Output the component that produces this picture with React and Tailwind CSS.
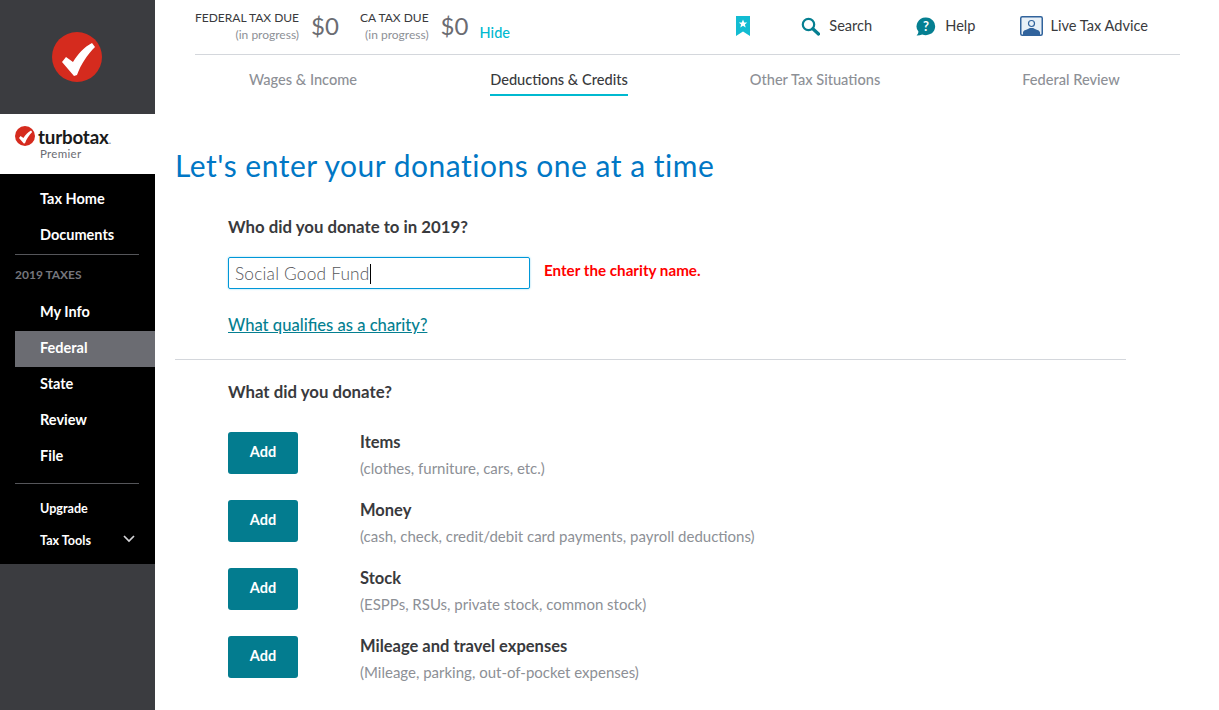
import React from "react";

function Check({ size }) {
  return (
    <svg width={size} height={size} viewBox="0 0 50 50" className="block shrink-0">
      <circle cx="25" cy="25" r="25" fill="#d52b1e" />
      <path d="M10 30 L14 25 L21 30 C26 22 32 15 40 11 L43 15 C35 23 29 32 25 43 L22 44 Z" fill="#fff" />
    </svg>
  );
}

function NavItem({ label, active, small }) {
  return (
    <div className={`h-9 pb-[2px] flex items-center ml-[15px] pl-[25px] font-bold text-white ${small ? "text-[12.6px]" : "text-[14.5px]"} ${active ? "bg-[#6b6c72]" : ""}`}>
      {label}
    </div>
  );
}

function Sidebar() {
  return (
    <aside className="w-[155px] shrink-0 bg-[#3b3c40] flex flex-col h-[710px]">
      <div className="h-[114px] flex items-center justify-center pr-px">
        <Check size={50} />
      </div>
      <div className="h-[60px] bg-white pl-[15px] pt-[12px]">
        <div className="flex items-start gap-[3px] h-[22px]">
          <Check size={20} />
          <span className="block h-[22px] text-[18.8px] leading-[22px] font-bold tracking-[-0.2px] text-[#1a1a1a]">turbotax<span className="text-[#8d9096] font-normal text-[12px] leading-none">.</span></span>
        </div>
        <div className="pl-[25px] text-[11.5px] leading-[12px] text-[#6b6c72] tracking-[0.3px]">Premier</div>
      </div>
      <nav className="h-[390px] bg-black flex flex-col pt-[8px]">
        <NavItem label="Tax Home" />
        <NavItem label="Documents" />
        <div className="ml-[15px] w-[124px] border-t border-[#55565a]" />
        <div className="ml-[15px] h-[40px] flex items-center text-[12px] font-bold text-[#75767c]">2019 TAXES</div>
        <NavItem label="My Info" />
        <NavItem label="Federal" active />
        <NavItem label="State" />
        <NavItem label="Review" />
        <NavItem label="File" />
        <div className="ml-[15px] w-[124px] border-t border-[#55565a] mt-[8px] mb-[8px]" />
        <NavItem label="Upgrade" small />
        <div className="relative mt-[-4px]">
          <NavItem label="Tax Tools" small />
          <svg width="12" height="8" viewBox="0 0 12 8" className="absolute left-[123px] top-[11px]" fill="none" stroke="#d5d5d8" strokeWidth="1.7">
            <path d="M1 1 L6 6 L11 1" />
          </svg>
        </div>
      </nav>
    </aside>
  );
}

function TaxDue({ label, amount }) {
  return (
    <div className="flex items-center">
      <div className="text-right">
        <div className="text-[12px] leading-[17px] text-[#393a3d]">{label}</div>
        <div className="text-[12px] leading-[17px] text-[#8d9096]">(in progress)</div>
      </div>
      <div className="ml-[12px] text-[24px] leading-[30px] text-[#6b6c72] w-[29px]">{amount}</div>
    </div>
  );
}

function Header() {
  return (
    <div className="ml-[40px] mr-[39px] h-[55px] pb-[2px] border-b border-[#d4d7dc] flex items-center text-[14.6px] text-[#393a3d]">
      <TaxDue label="FEDERAL TAX DUE" amount="$0" />
      <div className="ml-[20px]"><TaxDue label="CA TAX DUE" amount="$0" /></div>
      <span className="ml-[10px] mt-[13px] text-[14.5px] font-medium text-[#00b9d0]">Hide</span>
      <div className="ml-auto flex items-center h-full mr-[32px]">
        <svg width="14" height="20" viewBox="0 0 14 20" className="mr-[51px]">
          <path d="M0 0H14V20L7 15.5L0 20Z" fill="#12bcd2" />
          <path d="M7 3.5L8.2 6.4L11.2 6.6L8.9 8.5L9.7 11.4L7 9.8L4.3 11.4L5.1 8.5L2.8 6.6L5.8 6.4Z" fill="#fff" />
        </svg>
        <svg width="19" height="19" viewBox="0 0 19 19" className="mr-[9px]" fill="none">
          <circle cx="7.5" cy="7.5" r="5.7" stroke="#057f91" strokeWidth="2.2" />
          <path d="M11.8 11.8L17.5 17" stroke="#057f91" strokeWidth="3.2" strokeLinecap="round" />
        </svg>
        <span>Search</span>
        <svg width="20" height="19" viewBox="0 0 20 19" className="ml-[44px] mr-[9px]">
          <path d="M10 0.5a9.3 8.8 0 1 1-3.8 16.9C4.5 18.2 2.5 18.6 0.6 18.5C1.8 17.5 2.3 16.4 2.4 14.6A9 8.8 0 0 1 10 0.5Z" fill="#057f91" />
          <text x="10" y="14" textAnchor="middle" fontSize="13" fontWeight="700" fill="#fff" fontFamily="Lato, sans-serif">?</text>
        </svg>
        <span>Help</span>
        <svg width="23" height="20" viewBox="0 0 23 20" className="ml-[45px] mr-[7px]">
          <rect x="0.75" y="0.75" width="21.5" height="18.5" rx="1.5" fill="#e8f0f7" stroke="#31639c" strokeWidth="1.5" />
          <circle cx="11.5" cy="7.5" r="3" fill="#e8f0f7" stroke="#31639c" strokeWidth="1.2" />
          <path d="M3 19V16.5C3 14 8 13.5 9.8 12H13.2C15 13.5 20 14 20 16.5V19Z" fill="#31639c" />
        </svg>
        <span>Live Tax Advice</span>
      </div>
    </div>
  );
}

function Tab({ label, active }) {
  return (
    <div className="flex justify-center">
      <div className={`h-[41px] pt-[10px] flex items-center text-[14.6px] font-medium ${active ? "text-[#393a3d] border-b-2 border-[#00b9d0]" : "text-[#8d9096] border-b-2 border-transparent"}`}>
        {label}
      </div>
    </div>
  );
}

function Donation({ title, sub }) {
  return (
    <div className="flex items-center h-[42px]">
      <button className="w-[70px] h-[42px] pb-[2px] rounded-[3px] bg-[#037c8f] text-white text-[14.5px] font-bold">Add</button>
      <div className="ml-[62px] pt-[3px]">
        <div className="text-[16.5px] leading-[22px] font-bold text-[#393a3d]">{title}</div>
        <div className="mt-[5px] text-[15px] leading-[20px] text-[#8d9096]">{sub}</div>
      </div>
    </div>
  );
}

export default function App() {
  return (
    <div className="flex h-[710px] overflow-hidden bg-white font-['Lato',sans-serif]">
      <Sidebar />
      <main className="flex-1 min-w-0">
        <Header />
        <div className="ml-[20px] w-[1024px] grid grid-cols-4">
          <Tab label="Wages & Income" />
          <Tab label="Deductions & Credits" active />
          <Tab label="Other Tax Situations" />
          <Tab label="Federal Review" />
        </div>
        <div className="ml-[20px] w-[951px]">
          <h1 className="mt-[49px] text-[30px] leading-[40px] tracking-[0.5px] text-[#0077c5]">Let's enter your donations one at a time</h1>
          <div className="pl-[53px] border-b border-[#d4d7dc] h-[175px] pt-[31px]">
            <div className="text-[16.8px] leading-[22px] font-bold text-[#393a3d]">Who did you donate to in 2019?</div>
            <div className="flex items-center mt-[19px]">
              <div className="w-[302px] h-[32px] pt-[2px] rounded-[2px] border border-[#0097d8] shadow-[0_0_2px_#7fd0ef] flex items-center pl-[6px] text-[17.3px] font-light text-[#55565a] tracking-[0.2px]">
                Social Good Fund<span className="inline-block w-px h-[20px] bg-black" />
              </div>
              <span className="ml-[14px] mt-[-6px] text-[15.2px] font-bold text-[#ff0000]">Enter the charity name.</span>
            </div>
            <a className="block mt-[25px] text-[16.6px] leading-[22px] font-medium text-[#057f91] underline">What qualifies as a charity?</a>
          </div>
          <div className="pl-[53px] pt-[21px]">
            <div className="text-[16.8px] leading-[22px] font-bold text-[#393a3d]">What did you donate?</div>
            <div className="mt-[29px] flex flex-col gap-[26px]">
              <Donation title="Items" sub="(clothes, furniture, cars, etc.)" />
              <Donation title="Money" sub="(cash, check, credit/debit card payments, payroll deductions)" />
              <Donation title="Stock" sub="(ESPPs, RSUs, private stock, common stock)" />
              <Donation title="Mileage and travel expenses" sub="(Mileage, parking, out-of-pocket expenses)" />
            </div>
          </div>
        </div>
      </main>
    </div>
  );
}
